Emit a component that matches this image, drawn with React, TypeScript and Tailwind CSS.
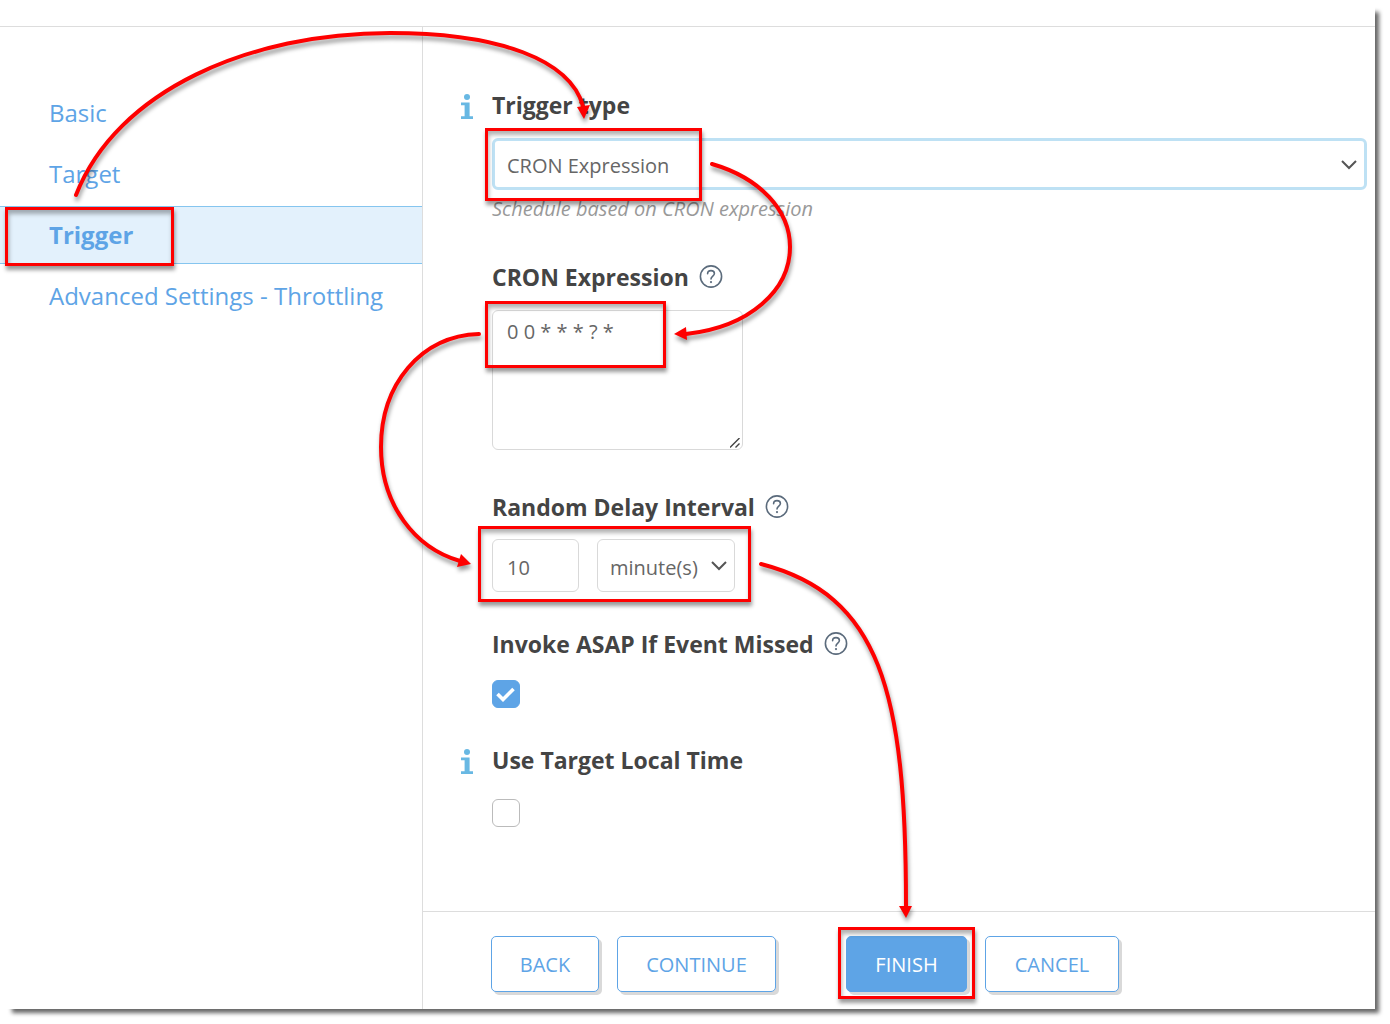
import type { ReactNode } from "react";

const NAV = ["Basic", "Target", "Trigger", "Advanced Settings - Throttling"];

const FONT = "font-['Open_Sans','Noto_Sans',sans-serif]";

function InfoIcon() {
  return (
    <svg width="14" height="26" viewBox="0 0 14 26" className="absolute top-[7px] -left-8" fill="#68b8e3" aria-hidden="true">
      <circle cx="7" cy="3" r="3" />
      <path d="M1 8.5h8.6v13.8H13V25H1v-2.7h3.6V11.2H1z" />
    </svg>
  );
}

function HelpIcon() {
  return (
    <svg width="24" height="24" viewBox="0 0 24 24" fill="none" stroke="#5b6b7c" strokeWidth="1.6" aria-hidden="true">
      <circle cx="12" cy="11.5" r="10.6" />
      <path d="M8.6 8.7c0-1.9 1.5-3.1 3.4-3.1s3.4 1.2 3.4 2.9c0 2.5-3.4 2.6-3.4 5.5" strokeLinecap="round" />
      <circle cx="12" cy="17.1" r="1.1" fill="#5b6b7c" stroke="none" />
    </svg>
  );
}

function Chevron({ className }: { className: string }) {
  return (
    <svg width="18" height="12" viewBox="0 0 18 12" fill="none" stroke="#555" strokeWidth="2" className={className} aria-hidden="true">
      <path d="M2 2l7 7 7-7" />
    </svg>
  );
}

function Highlight({ className }: { className: string }) {
  return (
    <div
      className={`pointer-events-none absolute z-10 border-3 border-[#fe0000] shadow-[1px_4px_4px_rgba(0,0,0,0.4),inset_1px_4px_4px_rgba(0,0,0,0.3)] ${className}`}
    />
  );
}

function FieldLabel({ htmlFor, info, help, children }: { htmlFor: string; info?: boolean; help?: boolean; children: ReactNode }) {
  return (
    <div className="relative flex h-9 items-center gap-2.5">
      {info && <InfoIcon />}
      <label htmlFor={htmlFor} className="text-[23px] font-bold whitespace-nowrap text-[#444]">
        {children}
      </label>
      {help && <HelpIcon />}
    </div>
  );
}

function Arrows() {
  return (
    <svg
      width="1390"
      height="1024"
      viewBox="0 0 1390 1024"
      className="pointer-events-none absolute top-0 left-0 z-20 drop-shadow-[1px_4px_2px_rgba(0,0,0,0.4)]"
      fill="none"
      stroke="#fe0000"
      strokeWidth="4"
      strokeLinecap="round"
      aria-hidden="true"
    >
      <path d="M76 195C117 90 250 33 390 33C500 33 570 60 583 106" />
      <path d="M712 164C760 178 790 210 790 247C790 290 750 327 686 334" />
      <path d="M479 334C420 336 381 385 381 447C381 505 415 548 460 561" />
      <path d="M761 564C880 595 906 690 906 906" />
      <g fill="#fe0000" stroke="none">
        <path d="M577 107L590 105L584 119Z" />
        <path d="M686 327L687 340L674 334Z" />
        <path d="M461 554L457 567L471 564Z" />
        <path d="M899 906H912L906 918Z" />
      </g>
    </svg>
  );
}

const BUTTON = "h-14 rounded-[5px] border border-[#5ea4e6] pt-0.5 text-xl shadow-[3px_3px_0_#d9d9d9]";

export default function App() {
  return (
    <div className={`relative flex min-h-screen bg-white pr-[15px] pb-[15px] ${FONT}`}>
      <div className="pointer-events-none absolute top-3 right-[11px] bottom-[11px] left-3 bg-[#666] blur-[2px]" />
      <div className="relative flex grow flex-col bg-white">
        <div className="h-[27px] border-b border-[#ddd]" />
        <div className="flex grow">
          <nav className="flex w-[423px] shrink-0 flex-col gap-[3px] border-r border-[#ddd] pt-[57px]">
            {NAV.map((item) => {
              const active = item === "Trigger";
              return (
                <div key={item} className="relative">
                  <a
                    href="#"
                    className={`flex h-[58px] items-center border-y pl-[49px] text-2xl text-[#5ea4e6] ${
                      active ? "border-[#85c5ef] bg-[#e3f1fc] font-bold" : "border-transparent"
                    }`}
                  >
                    {item}
                  </a>
                  {active && <Highlight className="top-px left-[5px] h-[59px] w-[169px]" />}
                </div>
              );
            })}
          </nav>

          <main className="flex grow flex-col">
            <form className="grow pt-[60px] pr-2 pl-[69px] text-xl text-[#666]">
              <FieldLabel htmlFor="type" info>
                Trigger type
              </FieldLabel>
              <div className="relative mt-[15px]">
                <select id="type" className="h-[52px] w-full appearance-none rounded-md border-3 border-[#bee1f4] bg-white px-3 pt-1 outline-none">
                  <option>CRON Expression</option>
                </select>
                <Chevron className="pointer-events-none absolute top-[21px] right-[9px]" />
                <Highlight className="-top-2.5 -left-[7px] h-[73px] w-[217px]" />
              </div>
              <p className="mt-[5px] leading-7 text-[#999] italic">Schedule based on CRON expression</p>

              <div className="mt-9">
                <FieldLabel htmlFor="cron" help>
                  CRON Expression
                </FieldLabel>
              </div>
              <div className="relative mt-[15px]">
                <div className="relative w-[251px]">
                  <textarea
                    id="cron"
                    defaultValue="0 0 * * * ? *"
                    className="block h-[140px] w-full resize-none rounded-md border border-[#d9d9d9] px-3.5 py-[7px] outline-none"
                  />
                  <svg width="10" height="10" viewBox="0 0 10 10" className="pointer-events-none absolute right-[3px] bottom-0.5" stroke="#444" strokeWidth="1.4" aria-hidden="true">
                    <path d="M0 9.5L9.5 0M5.5 9.5L9.5 5.5" />
                  </svg>
                </div>
                <Highlight className="-top-[9px] -left-[7px] h-[67px] w-[181px]" />
              </div>

              <div className="mt-[39px]">
                <FieldLabel htmlFor="delay" help>
                  Random Delay Interval
                </FieldLabel>
              </div>
              <div className="relative mt-3.5 flex gap-[18px]">
                <input id="delay" defaultValue="10" className="h-[53px] w-[87px] rounded-md border border-[#d9d9d9] px-3.5 pt-1 outline-none" />
                <div className="relative">
                  <select aria-label="Delay unit" className="h-[53px] w-[138px] appearance-none rounded-md border border-[#d9d9d9] bg-white px-3 pt-1 outline-none">
                    <option>minute(s)</option>
                  </select>
                  <Chevron className="pointer-events-none absolute top-[21px] right-[7px]" />
                </div>
                <Highlight className="-top-[13px] -left-3.5 h-[76px] w-[273px]" />
              </div>

              <div className="mt-[34px]">
                <FieldLabel htmlFor="asap" help>
                  Invoke ASAP If Event Missed
                </FieldLabel>
              </div>
              <div className="relative mt-[18px] size-7">
                <input id="asap" type="checkbox" defaultChecked className="peer block size-7 appearance-none rounded-md border border-[#bbb] checked:border-[#5ea4e6] checked:bg-[#5ea4e6]" />
                <svg viewBox="0 0 28 28" className="pointer-events-none absolute inset-0 hidden peer-checked:block" fill="none" stroke="#fff" strokeWidth="3.6" aria-hidden="true">
                  <path d="M5.5 14l5.5 5.5L21.5 9" />
                </svg>
              </div>

              <div className="mt-[34px]">
                <FieldLabel htmlFor="local" info>
                  Use Target Local Time
                </FieldLabel>
              </div>
              <input id="local" type="checkbox" className="mt-[21px] block size-7 appearance-none rounded-md border border-[#bbb] checked:bg-[#5ea4e6]" />
            </form>

            <footer className="flex border-t border-[#ddd] pt-6 pb-[17px] pl-[68px] text-[#5ea4e6]">
              <button type="button" className={`${BUTTON} w-[108px] bg-white`}>
                BACK
              </button>
              <button type="button" className={`${BUTTON} ml-[18px] w-[159px] bg-white`}>
                CONTINUE
              </button>
              <div className="relative ml-[70px]">
                <button type="button" className={`${BUTTON} w-[121px] bg-[#5ea4e6] text-white`}>
                  FINISH
                </button>
                <Highlight className="-top-[9px] -left-2 h-[72px] w-[137px]" />
              </div>
              <button type="button" className={`${BUTTON} ml-[18px] w-[134px] bg-white`}>
                CANCEL
              </button>
            </footer>
          </main>
        </div>
      </div>
      <Arrows />
    </div>
  );
}
